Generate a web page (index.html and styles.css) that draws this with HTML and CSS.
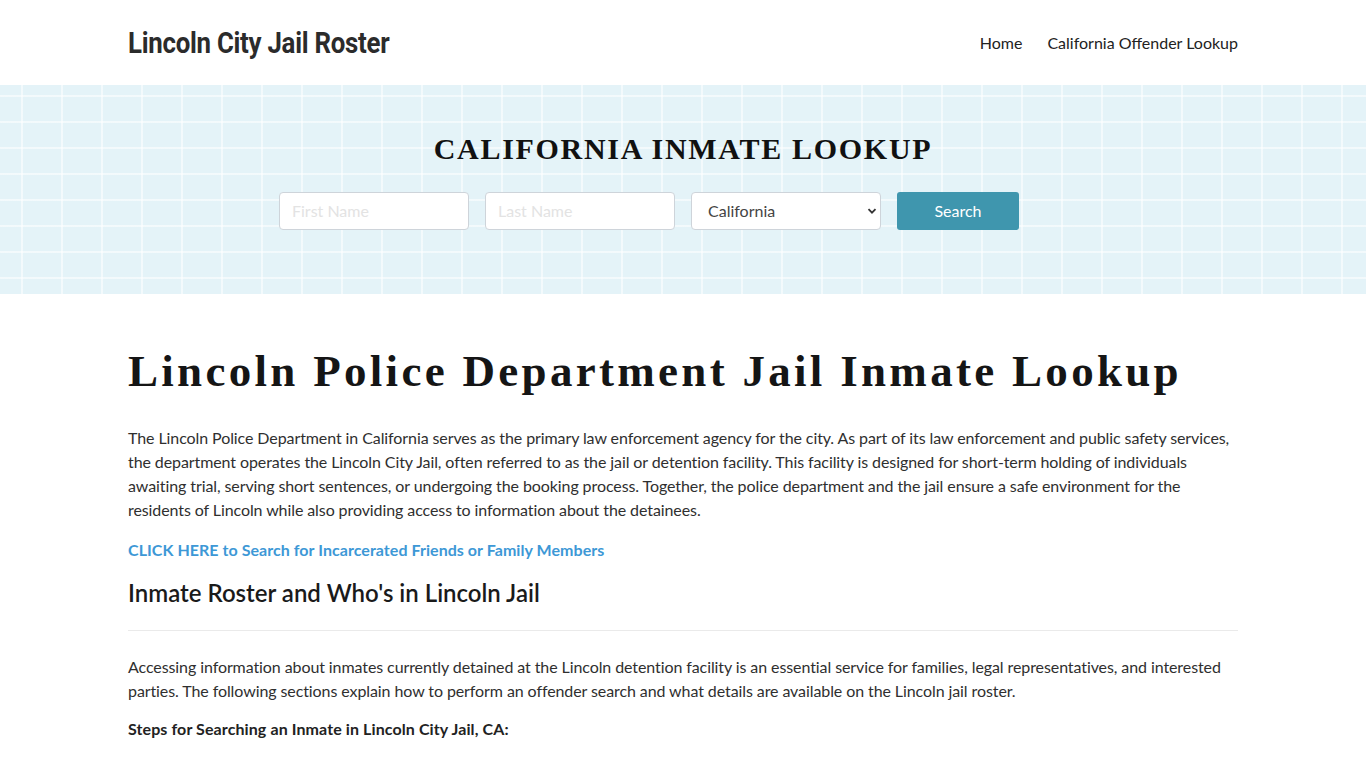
FILE: index.html
```html
<!DOCTYPE html>
<html lang="en">
<head>
<meta charset="utf-8">
<title>Lincoln City Jail Roster</title>
<link rel="stylesheet" href="styles.css">
</head>
<body>
<header class="site-header">
  <div class="container header-inner">
    <a class="logo" href="#"><span class="logo-text">Lincoln City Jail Roster</span></a>
    <nav class="nav">
      <a href="#">Home</a>
      <a href="#">California Offender Lookup</a>
    </nav>
  </div>
</header>
<section class="hero">
  <h2 class="hero-title">CALIFORNIA INMATE LOOKUP</h2>
  <form class="search-form">
    <input class="field" type="text" placeholder="First Name">
    <input class="field" type="text" placeholder="Last Name">
    <div class="select-wrap">
      <select class="field select">
        <option>California</option>
      </select>
      <svg class="chevron" width="10" height="10" viewBox="0 0 10 10"><path d="M1.5 3.2 L5 6.7 L8.5 3.2" fill="none" stroke="#333" stroke-width="1.8"/></svg>
    </div>
    <button class="btn" type="button">Search</button>
  </form>
</section>
<main class="container content">
  <h1 class="page-title">Lincoln Police Department Jail Inmate Lookup</h1>
  <p class="text">The Lincoln Police Department in California serves as the primary law enforcement agency for the city. As part of its law enforcement and public safety services, the department operates the Lincoln City Jail, often referred to as the jail or detention facility. This facility is designed for short-term holding of individuals awaiting trial, serving short sentences, or undergoing the booking process. Together, the police department and the jail ensure a safe environment for the residents of Lincoln while also providing access to information about the detainees.</p>
  <p class="text"><a class="cta" href="#">CLICK HERE to Search for Incarcerated Friends or Family Members</a></p>
  <h2 class="section-title">Inmate Roster and Who's in Lincoln Jail</h2>
  <hr class="rule">
  <p class="text tight">Accessing information about inmates currently detained at the Lincoln detention facility is an essential service for families, legal representatives, and interested parties. The following sections explain how to perform an offender search and what details are available on the Lincoln jail roster.</p>
  <p class="text strong">Steps for Searching an Inmate in Lincoln City Jail, CA:</p>
</main>
</body>
</html>
```

FILE: styles.css
```css
* { box-sizing: border-box; }
html, body { margin: 0; padding: 0; }
body {
  font-family: Lato, "Open Sans", Arial, sans-serif;
  font-size: 16px;
  line-height: 24px;
  color: #2f2f2f;
  background: #fff;
}
.container {
  width: 1110px;
  margin: 0 auto;
}
.site-header { height: 85px; }
.header-inner {
  height: 85px;
  display: flex;
  align-items: center;
  justify-content: space-between;
}
.logo {
  text-decoration: none;
  color: #2b2b2b;
  display: block;
}
.logo-text {
  display: inline-block;
  font-family: "Roboto", "DejaVu Sans Condensed", sans-serif;
  font-weight: 700;
  font-size: 30px;
  line-height: 36px;
  letter-spacing: -0.3px;
  transform: scaleX(0.86);
  transform-origin: left center;
}
.nav {
  display: flex;
  gap: 25px;
}
.nav a {
  color: #222;
  text-decoration: none;
  font-size: 16px;
}
.hero {
  height: 209px;
  padding-top: 46px;
  background-color: #e4f3f8;
  background-image:
    repeating-linear-gradient(90deg, transparent 0, transparent 21px, rgba(255,255,255,0.55) 21px, rgba(255,255,255,0.55) 23px, transparent 23px, transparent 40px),
    repeating-linear-gradient(180deg, transparent 0, transparent 10px, rgba(255,255,255,0.55) 10px, rgba(255,255,255,0.55) 12px, transparent 12px, transparent 26px);
  text-align: center;
}
.hero-title {
  margin: 0;
  font-family: "Liberation Serif", "Times New Roman", serif;
  font-weight: 700;
  font-size: 30px;
  line-height: 36px;
  letter-spacing: 1.7px;
  color: #111;
}
.search-form {
  margin-top: 25px;
  margin-left: calc(50% - 404px);
  display: flex;
  justify-content: flex-start;
  gap: 16px;
}
.field {
  width: 190px;
  height: 38px;
  border: 1px solid #ced4da;
  border-radius: 4px;
  background: #fff;
  font-family: Lato, sans-serif;
  font-size: 16px;
  line-height: 22px;
  padding: 0 12px 1px;
  color: #495057;
}
.field::placeholder { color: #e3e3e3; }
.select-wrap { position: relative; }
.select {
  appearance: none;
  -webkit-appearance: none;
  padding-left: 16px;
  color: #444;
}
.chevron {
  position: absolute;
  right: 4px;
  top: 14px;
  pointer-events: none;
}
.btn {
  width: 122px;
  height: 38px;
  border: none;
  border-radius: 3px;
  background: #3f96ae;
  color: #fff;
  font-family: Lato, sans-serif;
  font-size: 16px;
  padding: 0 0 1px;
}
.content { padding-top: 50px; }
.page-title {
  margin: 0 0 28px;
  font-family: "Liberation Serif", "Times New Roman", serif;
  font-weight: 700;
  font-size: 45px;
  line-height: 54px;
  letter-spacing: 3.3px;
  color: #151515;
}
.text {
  margin: 0 0 16px;
  letter-spacing: -0.09px;
}
.text.tight { margin-bottom: 14px; }
.cta {
  color: #3d98d6;
  font-weight: 700;
  text-decoration: none;
  letter-spacing: 0.05px;
}
.section-title {
  margin: 0;
  font-family: Lato, sans-serif;
  font-weight: 600;
  font-size: 24px;
  line-height: 29px;
  color: #1a1a1a;
}
.rule {
  margin: 23px 0 24px;
  border: 0;
  border-top: 1px solid #eaeaea;
}
.text.strong { font-weight: 700; color: #222; letter-spacing: 0.1px; }
```
